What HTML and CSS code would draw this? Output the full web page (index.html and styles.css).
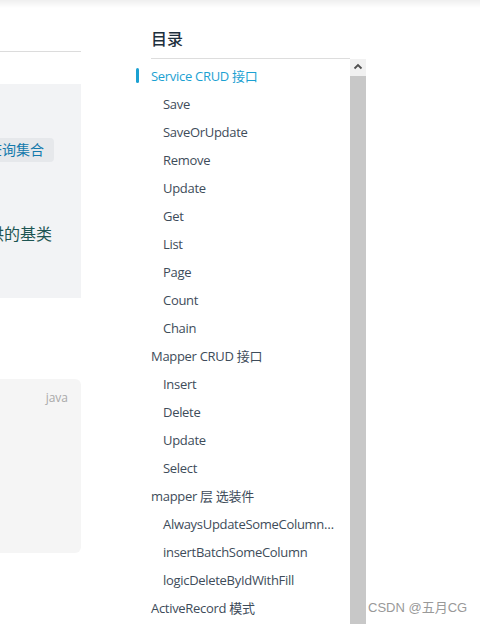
FILE: index.html
```html
<!DOCTYPE html>
<html lang="zh-CN">
<head>
<meta charset="utf-8">
<link rel="stylesheet" href="styles.css">
</head>
<body>
<div class="topbar"></div>
<div class="page">
  <div class="article">
    <div class="rule"></div>
    <div class="note">
      <div class="tag-row"><span class="tag">查询集合</span></div>
      <div class="note-text"><span>提供的基类</span></div>
    </div>
    <div class="code"><span class="lang">java</span></div>
  </div>
  <aside class="toc">
    <div class="toc-title">目录</div>
    <div class="toc-rule"></div>
    <div class="toc-body">
      <ul class="toc-list">
        <li class="l1 active">Service CRUD 接口</li>
        <li class="l2">Save</li>
        <li class="l2">SaveOrUpdate</li>
        <li class="l2">Remove</li>
        <li class="l2">Update</li>
        <li class="l2">Get</li>
        <li class="l2">List</li>
        <li class="l2">Page</li>
        <li class="l2">Count</li>
        <li class="l2">Chain</li>
        <li class="l1">Mapper CRUD 接口</li>
        <li class="l2">Insert</li>
        <li class="l2">Delete</li>
        <li class="l2">Update</li>
        <li class="l2">Select</li>
        <li class="l1">mapper 层 选装件</li>
        <li class="l2">AlwaysUpdateSomeColumnById</li>
        <li class="l2">insertBatchSomeColumn</li>
        <li class="l2">logicDeleteByIdWithFill</li>
        <li class="l1">ActiveRecord 模式</li>
      </ul>
      <div class="scrollbar">
        <div class="sb-btn">
          <svg width="16" height="17" viewBox="0 0 16 17"><path d="M4.5 9.5 L8 6 L11.5 9.5" fill="none" stroke="#505050" stroke-width="1.8"/></svg>
        </div>
        <div class="sb-thumb"></div>
      </div>
    </div>
  </aside>
</div>
<div class="watermark">CSDN @五月CG</div>
</body>
</html>
```
FILE: styles.css
```css
html, body {
  margin: 0;
  padding: 0;
}
body {
  width: 480px;
  height: 624px;
  overflow: hidden;
  background: #fff;
  font-family: "Open Sans", "Noto Sans CJK SC", sans-serif;
  position: relative;
}
.topbar {
  height: 8px;
  background: linear-gradient(#efefef, #fff);
}
.page {
  display: flex;
  height: 616px;
}
.article {
  width: 81px;
  flex: none;
  display: flex;
  flex-direction: column;
}
.rule {
  height: 1px;
  background: #dcdcdc;
  margin-top: 43px;
}
.note {
  margin-top: 32px;
  height: 214px;
  background: #f2f3f5;
  padding-top: 54px;
  box-sizing: border-box;
  overflow: hidden;
}
.tag-row {
  display: flex;
  justify-content: flex-end;
  padding-right: 27px;
  white-space: nowrap;
}
.tag {
  display: inline-block;
  height: 24px;
  line-height: 24px;
  padding: 0 10px;
  background: #e6e8eb;
  border-radius: 4px;
  color: #1379ac;
  font-size: 14px;
  flex: none;
}
.note-text {
  margin-top: 60px;
  display: flex;
  justify-content: flex-end;
  padding-right: 29px;
  white-space: nowrap;
  height: 24px;
  line-height: 24px;
  font-size: 16px;
  color: #1d5552;
}
.note-text span { flex: none; }
.code {
  margin-top: 81px;
  height: 174px;
  background: #f5f5f5;
  border-radius: 0 6px 6px 0;
  display: flex;
  justify-content: flex-end;
  align-items: flex-start;
  padding: 11px 13px 0 0;
  box-sizing: border-box;
}
.lang {
  font-size: 12px;
  line-height: 16px;
  color: #a9a9a9;
}
.toc {
  margin-left: 55px;
  width: 230px;
  flex: none;
  display: flex;
  flex-direction: column;
}
.toc-title {
  margin-top: 20px;
  padding-left: 15px;
  font-size: 16px;
  line-height: 22px;
  color: #1d2f3d;
  font-weight: 500;
}
.toc-rule {
  margin-top: 8px;
  margin-left: 15px;
  width: 199px;
  height: 1px;
  background: #dddddd;
}
.toc-body {
  flex: 1;
  display: flex;
  overflow: hidden;
}
.toc-list {
  flex: 1;
  min-width: 0;
  list-style: none;
  margin: 0;
  padding: 3px 0 0 0;
}
.toc-list li {
  position: relative;
  height: 28px;
  line-height: 28px;
  font-size: 13px;
  letter-spacing: -0.3px;
  color: #3e4c5a;
  white-space: nowrap;
  overflow: hidden;
  text-overflow: ellipsis;
  padding-right: 14px;
}
.l1 { padding-left: 15px; }
.l2 { padding-left: 27px; }
.toc-list li.active {
  color: #1ba1d2;
}
.toc-list li.active::before {
  content: "";
  position: absolute;
  left: 0;
  top: 6px;
  width: 3px;
  height: 15px;
  border-radius: 2px;
  background: #1ba1d2;
}
.scrollbar {
  width: 16px;
  flex: none;
  display: flex;
  flex-direction: column;
}
.sb-btn {
  height: 17px;
  background: #f1f1f1;
  display: flex;
}
.sb-thumb {
  flex: 1;
  background: #c8c8c8;
}
.watermark {
  position: absolute;
  left: 368px;
  top: 599px;
  font-family: "Liberation Sans", "Noto Sans CJK SC", sans-serif;
  font-size: 13px;
  line-height: 18px;
  color: #999;
}
```
